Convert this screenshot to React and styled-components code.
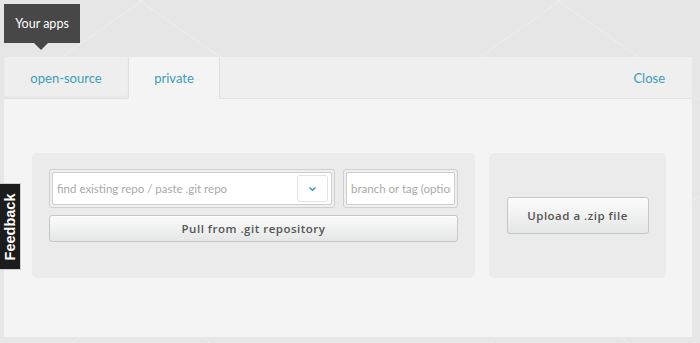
import React from "react";
import styled, { createGlobalStyle } from "styled-components";

const GlobalStyle = createGlobalStyle`
  body {
    margin: 0;
    background-color: #e6e6e6;
    background-image:
      repeating-linear-gradient(35deg, transparent 0 120px, rgba(255,255,255,0.22) 120px 121px, transparent 121px 240px),
      repeating-linear-gradient(-35deg, transparent 0 120px, rgba(255,255,255,0.22) 120px 121px, transparent 121px 240px);
    font-family: Lato, "Open Sans", sans-serif;
  }
`;

const Page = styled.div`
  height: 343px;
  box-sizing: border-box;
  padding: 4px 8px 6px 4px;
  display: flex;
  flex-direction: column;
`;

const Tooltip = styled.div`
  position: relative;
  align-self: flex-start;
  width: 76px;
  height: 39px;
  background: #474747;
  color: #fff;
  font-size: 12.5px;
  display: flex;
  align-items: center;
  justify-content: center;
  margin-bottom: 14px;

  &::after {
    content: "";
    position: absolute;
    left: 30px;
    bottom: -7px;
    border-left: 7px solid transparent;
    border-right: 7px solid transparent;
    border-top: 7px solid #474747;
  }
`;

const Panel = styled.div`
  flex: 1;
  background: #f4f4f4;
  display: flex;
  flex-direction: column;
`;

const TabBar = styled.div`
  height: 41px;
  display: flex;
  background: #efefef;
  border-bottom: 1px solid #e2e2e2;
`;

const Tab = styled.div`
  width: ${({ $w }) => $w}px;
  display: flex;
  align-items: center;
  justify-content: center;
  font-size: 13px;
  color: #3d9cb8;
  background: ${({ $active }) => ($active ? "#f4f4f4" : "#eeeeee")};
  border-right: 1px solid #e0e0e0;
  margin-bottom: ${({ $active }) => ($active ? "-1px" : "0")};
  box-shadow: ${({ $active }) => ($active ? "none" : "inset 0 -2px 2px rgba(0,0,0,0.03)")};
`;

const Close = styled.div`
  margin-left: auto;
  padding-right: 27px;
  display: flex;
  align-items: center;
  font-size: 13px;
  color: #3d9cb8;
`;

const Body = styled.div`
  padding: 54px 0 0 28px;
  display: flex;
  gap: 14px;
`;

const Card = styled.div`
  width: ${({ $w }) => $w}px;
  height: 125px;
  box-sizing: border-box;
  background: #ebebeb;
  border-radius: 5px;
  padding: ${({ $center }) => ($center ? "0" : "16px 0 0 17px")};
  display: flex;
  flex-direction: column;
  align-items: ${({ $center }) => ($center ? "center" : "flex-start")};
  justify-content: ${({ $center }) => ($center ? "center" : "flex-start")};
`;

const Row = styled.div`
  display: flex;
  gap: 8px;
`;

const Field = styled.div`
  width: ${({ $w }) => $w}px;
  height: 39px;
  box-sizing: border-box;
  border: 1px solid #cfcfcf;
  border-radius: 3px;
  padding: 2px;
  background: #efefef;
`;

const FieldInner = styled.div`
  height: 100%;
  box-sizing: border-box;
  border: 1px solid #cdcdcd;
  border-radius: 2px;
  background: #fff;
  display: flex;
  align-items: center;
  padding: 0 3px 0 4px;
  overflow: hidden;
`;

const Placeholder = styled.span`
  flex: 1;
  font-size: 11.5px;
  color: #a9a9a9;
  white-space: nowrap;
  overflow: hidden;
`;

const SelectToggle = styled.div`
  width: 31px;
  height: 27px;
  box-sizing: border-box;
  border: 1px solid #e2e2e2;
  border-radius: 3px;
  background: #fff;
  display: flex;
  align-items: center;
  justify-content: center;
`;

const Button = styled.div`
  width: ${({ $w }) => $w}px;
  height: ${({ $h }) => $h}px;
  margin-top: ${({ $mt }) => $mt || 0}px;
  box-sizing: border-box;
  border: 1px solid #c6c6c6;
  border-radius: 3px;
  background: linear-gradient(#fbfbfb, #e5e6e6);
  box-shadow: inset 0 1px 0 #fff;
  display: flex;
  align-items: center;
  justify-content: center;
  font-family: "Open Sans", sans-serif;
  font-size: 11.5px;
  font-weight: 600;
  letter-spacing: 0.5px;
  color: #555;
`;

const Feedback = styled.div`
  position: fixed;
  left: 0;
  top: 183px;
  width: 21px;
  height: 87px;
  box-sizing: border-box;
  background: #1c1c1c;
  border: 1px solid #cfcfcf;
  border-left: none;
  display: flex;
  align-items: center;
  justify-content: center;

  span {
    transform: rotate(-90deg);
    color: #fff;
    font-family: "Liberation Sans", Arial, sans-serif;
    font-weight: bold;
    font-size: 14.5px;
    white-space: nowrap;
  }
`;

const App = () => {
  return (
    <>
      <GlobalStyle />
      <Page>
        <Tooltip>Your apps</Tooltip>
        <Panel>
          <TabBar>
            <Tab $w={124}>open-source</Tab>
            <Tab $w={90} $active>
              private
            </Tab>
            <Close>Close</Close>
          </TabBar>
          <Body>
            <Card $w={443}>
              <Row>
                <Field $w={286}>
                  <FieldInner>
                    <Placeholder>find existing repo / paste .git repo</Placeholder>
                    <SelectToggle>
                      <svg width="9" height="6" viewBox="0 0 9 6">
                        <path d="M1.5 1.5 L4.5 4.2 L7.5 1.5" fill="none" stroke="#3d9cb8" strokeWidth="1.6" />
                      </svg>
                    </SelectToggle>
                  </FieldInner>
                </Field>
                <Field $w={115}>
                  <FieldInner>
                    <Placeholder>branch or tag (optional)</Placeholder>
                  </FieldInner>
                </Field>
              </Row>
              <Button $w={409} $h={27} $mt={7}>
                Pull from .git repository
              </Button>
            </Card>
            <Card $w={177} $center>
              <Button $w={142} $h={37}>
                Upload a .zip file
              </Button>
            </Card>
          </Body>
        </Panel>
      </Page>
      <Feedback>
        <span>Feedback</span>
      </Feedback>
    </>
  );
};

export default App;
